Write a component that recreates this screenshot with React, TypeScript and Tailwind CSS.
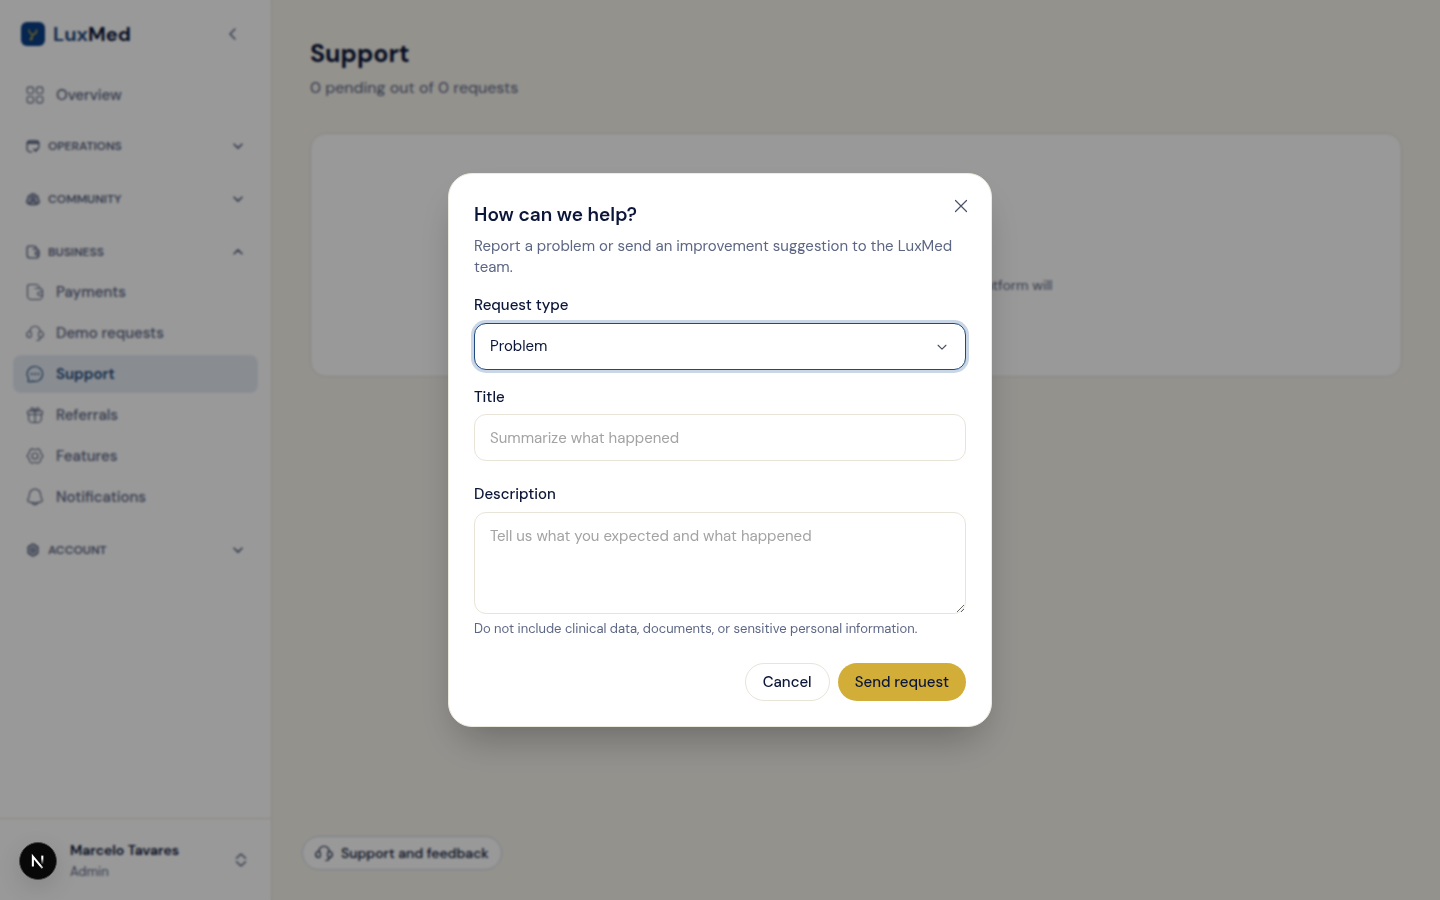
import type { ReactNode } from "react";

type IconProps = { className?: string; strong?: boolean };

function Svg({ className = "size-[18px]", strong, children }: IconProps & { children: ReactNode }) {
  return (
    <svg
      viewBox="0 0 24 24"
      fill="none"
      stroke="currentColor"
      strokeWidth={strong ? 2.4 : 1.5}
      strokeLinecap="round"
      strokeLinejoin="round"
      className={`shrink-0 ${className}`}
      aria-hidden="true"
    >
      {children}
    </svg>
  );
}

function GridIcon(p: IconProps) {
  return (
    <Svg {...p}>
      <rect x="1.5" y="1.5" width="8.5" height="8.5" rx="2.4" />
      <rect x="14" y="1.5" width="8.5" height="8.5" rx="2.4" />
      <rect x="1.5" y="14" width="8.5" height="8.5" rx="2.4" />
      <rect x="14" y="14" width="8.5" height="8.5" rx="2.4" />
    </Svg>
  );
}

function CalendarIcon(p: IconProps) {
  return (
    <Svg {...p}>
      <path d="M10 22H7a5 5 0 0 1-5-5V8a5 5 0 0 1 5-5h10a5 5 0 0 1 5 5v6" />
      <path d="M3 6.500h18" strokeWidth="4" />
      <path d="M13 17.500l2.500 2 6-4-5 5.500" />
    </Svg>
  );
}

function PeopleIcon(p: IconProps) {
  return (
    <Svg {...p}>
      <path d="M7 6a5.500 5.500 0 0 1 10 0c3 0 4.500 3 3 5.500 2.500 1.500 3 4 2.500 6.500-3 4.500-18 4.500-21 0C1 15.500 1.500 13 4 11.500 2.500 9 4 6 7 6Z" fill="currentColor" fillOpacity="0.35" />
      <circle cx="12" cy="10" r="3" />
      <path d="M6 20c0-6 12-6 12 0" />
    </Svg>
  );
}

function WalletIcon(p: IconProps) {
  return (
    <Svg {...p}>
      <path d="M2 5v12a5 5 0 0 0 5 5h10a5 5 0 0 0 5-5v-6a4 4 0 0 0-4-4h-6M2 5a3 3 0 0 1 3-3h8a5 5 0 0 1 5 5" />
      <path d="M22 12h-4a2.300 2.300 0 0 0 0 4.600h4" />
    </Svg>
  );
}

function HeadsetIcon(p: IconProps) {
  return (
    <Svg {...p}>
      <path d="M5 10a7 7 0 0 1 14 0" />
      <path d="M5 10a4 4 0 0 0 0 8c1.500 0 2-.6 2-2v-4c0-1.400-.5-2-2-2Z" />
      <path d="M19 10a4 4 0 0 1 0 8c-1.500 0-2-.6-2-2v-4c0-1.400.5-2 2-2Z" />
      <path d="M19 18c0 2.500-1.500 4-4.500 4" />
    </Svg>
  );
}

function ChatIcon(p: IconProps) {
  return (
    <Svg {...p}>
      <path d="M12 2a10 10 0 1 1-3 19.500c-2 .8-4 1-6.500.5 1-1.500 1.200-2.800.8-4.500A10 10 0 0 1 12 2Z" />
      <path d="M7.500 12h.1M12 12h.1M16.500 12h.1" strokeWidth="2.400" />
    </Svg>
  );
}

function GiftIcon(p: IconProps) {
  return (
    <Svg {...p}>
      <path d="M3.500 11v6a5 5 0 0 0 5 5h7a5 5 0 0 0 5-5v-6" />
      <rect x="2" y="6.500" width="20" height="4.800" rx="1.800" />
      <path d="M12 6.500V22M12 6.500C9 6.500 6.500 6 6.500 4S10 1 12 6.500ZM12 6.500c3 0 5.500-.5 5.500-2.500S14 1 12 6.500Z" />
    </Svg>
  );
}

function HexIcon(p: IconProps) {
  return (
    <Svg {...p}>
      <path d="M8 2.500c1.500 0 2 .9 4 .9s2.500-.9 4-.9 2 .8 3 2.500c.9 1.500.2 2.200 1.200 3.800S22.500 10.500 22.500 12s-1.300 1.600-2.300 3.200-.3 2.300-1.200 3.800c-1 1.700-1.500 2.500-3 2.500s-2-.9-4-.9-2.500.9-4 .9-2-.8-3-2.500c-.9-1.500-.2-2.200-1.200-3.800S1.500 13.500 1.500 12s1.300-1.600 2.300-3.200S4.100 6.500 5 5c1-1.700 1.500-2.500 3-2.500Z" />
      <circle cx="12" cy="12" r="4" />
    </Svg>
  );
}

function BellIcon(p: IconProps) {
  return (
    <Svg {...p}>
      <path d="M12 1.500a7.500 7.500 0 0 0-7.500 7.500c0 3-.8 4.200-1.800 5.800-1 1.700-.4 3 1.500 3.700 4.500 1.400 11.100 1.400 15.600 0 1.900-.7 2.500-2 1.500-3.700-1-1.600-1.800-2.800-1.800-5.800A7.500 7.500 0 0 0 12 1.500Z" />
      <path d="M8.500 20c.8 2.800 6.200 2.800 7 0" />
    </Svg>
  );
}

function CogIcon(p: IconProps) {
  return (
    <Svg {...p}>
      <path
        d="M9.500 2h5l.8 3 3.200-.5 2.500 4.300L19.500 12l1.500 3.200-2.500 4.300-3.200-.5-.8 3h-5l-.8-3-3.200.5L3 15.200 4.500 12 3 8.800l2.500-4.300 3.200.5Z"
        fill="currentColor"
        fillOpacity="0.35"
      />
      <circle cx="12" cy="12" r="3.200" />
    </Svg>
  );
}

function Chevron({ dir, className }: { dir: "up" | "down" | "left"; className: string }) {
  const d = { up: "M3.500 10L8 5.500l4.500 4.500", down: "M3.500 6L8 10.500 12.500 6", left: "M10 3L5 8l5 5" }[dir];
  return (
    <svg viewBox="0 0 16 16" fill="none" stroke="currentColor" strokeLinecap="round" strokeLinejoin="round" className={`shrink-0 ${className}`} aria-hidden="true">
      <path d={d} />
    </svg>
  );
}

function NavItem({ icon, label, active }: { icon: ReactNode; label: string; active?: boolean }) {
  return (
    <a
      href="#"
      aria-current={active ? "page" : undefined}
      className={`flex h-[38px] items-center gap-3 rounded-lg px-[13px] text-[15px] ${
        active ? "bg-[#e5ebf3] font-semibold text-[#1f4a7d]" : "font-medium text-[#5d6785]"
      }`}
    >
      {icon}
      {label}
    </a>
  );
}

function Section({ icon, label, open }: { icon: ReactNode; label: string; open?: boolean }) {
  return (
    <button type="button" aria-expanded={!!open} className="flex h-[33px] w-full items-center gap-2 px-[13px] text-left text-[12px] font-semibold text-[#5d6785]">
      {icon}
      <span className="flex-1">{label}</span>
      <Chevron dir={open ? "up" : "down"} className="size-[14px] stroke-2" />
    </button>
  );
}

function Sidebar() {
  return (
    <aside className="flex w-[272px] shrink-0 flex-col border-r border-[#e8e4d8] bg-white">
      <div className="flex h-[68px] items-center pr-[30px] pl-[21px]">
        <svg viewBox="0 0 24 24" className="size-6" aria-hidden="true">
          <rect width="24" height="24" rx="6" fill="#0a3f86" />
          <path d="M8 8c.4 3 2 4.500 4 4.500M15.500 8c.3 2.500-1.200 4-3.500 4.500-.5 2-1.200 3.500-2.700 5" fill="none" stroke="#b8a53c" strokeWidth="1.500" strokeLinecap="round" />
          <circle cx="10.200" cy="17" r="1.400" fill="#b8a53c" />
        </svg>
        <span className="ml-2 flex-1 text-[20px] font-bold text-[#0b1638]">
          <span className="text-[#1f4a7d]">Lux</span>Med
        </span>
        <button type="button" aria-label="Collapse sidebar" className="text-[#5d6785]">
          <Chevron dir="left" className="size-4 stroke-[1.5]" />
        </button>
      </div>
      <nav className="flex-1 px-[13px] pt-2">
        <NavItem icon={<GridIcon />} label="Overview" />
        <div className="mt-[15px] flex flex-col gap-5">
          <Section icon={<CalendarIcon className="size-[14px]" strong />} label="OPERATIONS" />
          <Section icon={<PeopleIcon className="size-[14px]" strong />} label="COMMUNITY" />
          <Section icon={<WalletIcon className="size-[14px]" strong />} label="BUSINESS" open />
        </div>
        <div className="mt-[5px] mb-[17px] flex flex-col gap-[3px]">
          <NavItem icon={<WalletIcon />} label="Payments" />
          <NavItem icon={<HeadsetIcon />} label="Demo requests" />
          <NavItem icon={<ChatIcon />} label="Support" active />
          <NavItem icon={<GiftIcon />} label="Referrals" />
          <NavItem icon={<HexIcon />} label="Features" />
          <NavItem icon={<BellIcon />} label="Notifications" />
        </div>
        <Section icon={<CogIcon className="size-[14px]" strong />} label="ACCOUNT" />
      </nav>
      <div className="flex h-[82px] items-center border-t border-[#e8e4d8] pr-[22px] pl-[70px]">
        <div className="flex-1 pt-0.5">
          <p className="text-[14px] leading-[22px] font-semibold text-[#0b1638]">Marcelo Tavares</p>
          <p className="text-[13px] leading-[22px] text-[#5d6785]">Admin</p>
        </div>
        <button type="button" aria-label="Account menu" className="text-[#5d6785]">
          <svg viewBox="0 0 16 16" fill="none" stroke="currentColor" strokeWidth="1.500" strokeLinecap="round" strokeLinejoin="round" className="size-4" aria-hidden="true">
            <path d="M3.500 6.300L6.800 3a1.700 1.700 0 0 1 2.400 0l3.300 3.300M3.500 9.700L6.800 13a1.700 1.700 0 0 0 2.400 0l3.300-3.300" />
          </svg>
        </button>
      </div>
    </aside>
  );
}

function DevBadge() {
  return (
    <button
      type="button"
      aria-label="Open developer tools"
      className="fixed bottom-[20px] left-[19px] flex size-[38px] items-center justify-center rounded-full border border-[#4a4a4a] bg-[#080808] shadow-[0_8px_24px_rgba(0,0,0,0.12)]"
    >
      <svg viewBox="0 0 40 40" className="size-[38px]" fill="none" aria-hidden="true">
        <defs>
          <linearGradient id="stem" x1="0" y1="14" x2="0" y2="24" gradientUnits="userSpaceOnUse">
            <stop offset="0.300" stopColor="#fff" />
            <stop offset="1" stopColor="#fff" stopOpacity="0" />
          </linearGradient>
          <linearGradient id="slash" x1="14" y1="14" x2="27" y2="28" gradientUnits="userSpaceOnUse">
            <stop offset="0.700" stopColor="#fff" />
            <stop offset="1" stopColor="#fff" stopOpacity="0.500" />
          </linearGradient>
        </defs>
        <path d="M14.300 26V15.200L25 28" stroke="url(#slash)" strokeWidth="2.300" />
        <path d="M24.800 14v10" stroke="url(#stem)" strokeWidth="2.300" />
      </svg>
    </button>
  );
}

const labelClass = "block text-[15px] leading-5 font-medium text-[#0b1638]";

function SupportDialog() {
  return (
    <div className="fixed inset-0 flex items-center justify-center bg-black/40 p-4 backdrop-blur-[1px]">
      <div
        role="dialog"
        aria-modal="true"
        aria-labelledby="dialog-title"
        className="relative w-full max-w-[544px] rounded-3xl border border-[#ece9df] bg-white px-[25px] pt-[26px] pb-[25px] shadow-[0_20px_40px_-12px_rgba(0,0,0,0.3)]"
      >
        <button type="button" aria-label="Close" className="absolute top-6 right-[22px] text-[#4a5068]">
          <svg viewBox="0 0 16 16" fill="none" stroke="currentColor" strokeWidth="1.200" strokeLinecap="round" className="size-4" aria-hidden="true">
            <path d="M2.500 2.500l11 11M13.500 2.500l-11 11" />
          </svg>
        </button>
        <h2 id="dialog-title" className="text-[19px] leading-[30px] font-semibold text-[#0b1638]">
          How can we help?
        </h2>
        <p className="mt-1.5 text-[15px] leading-[21px] text-[#5d6785]">
          Report a problem or send an improvement suggestion to the LuxMed team.
        </p>
        <form className="mt-[17px]">
          <label htmlFor="request-type" className={labelClass}>
            Request type
          </label>
          <div className="mt-2 grid items-center">
            <select
              id="request-type"
              className="col-start-1 row-start-1 h-[47px] w-full appearance-none rounded-xl border border-[#1f4a7d] bg-white px-[15px] text-[15px] text-[#0b1638] ring-3 ring-[#c9d6e6] outline-none"
            >
              <option>Problem</option>
            </select>
            <Chevron dir="down" className="pointer-events-none col-start-1 row-start-1 mr-[17px] size-[14px] justify-self-end stroke-[1.3] text-[#4a5068]" />
          </div>
          <label htmlFor="title" className={`mt-[17px] ${labelClass}`}>
            Title
          </label>
          <input
            id="title"
            type="text"
            placeholder="Summarize what happened"
            className="mt-[7px] h-[47px] w-full rounded-xl border border-[#e8e4d8] px-[15px] text-[15px] placeholder:text-[#a3a3a3]"
          />
          <label htmlFor="description" className={`mt-[23px] ${labelClass}`}>
            Description
          </label>
          <textarea
            id="description"
            placeholder="Tell us what you expected and what happened"
            className="mt-2 block h-[102px] w-full resize rounded-xl border border-[#e8e4d8] px-[15px] py-3 text-[15px] leading-[22px] placeholder:text-[#a3a3a3]"
          />
          <p className="mt-1.5 text-[13px] leading-[18px] text-[#5d6785]">
            Do not include clinical data, documents, or sensitive personal information.
          </p>
          <div className="mt-[25px] flex justify-end gap-2">
            <button type="button" className="h-[38px] rounded-full border border-[#e8e4d8] px-[17px] text-[15px] font-medium text-[#0b1638]">
              Cancel
            </button>
            <button type="submit" className="h-[38px] rounded-full bg-[#d2ae38] px-[17px] text-[15px] font-medium text-[#0b1638]">
              Send request
            </button>
          </div>
        </form>
      </div>
    </div>
  );
}

export default function App() {
  return (
    <div className="flex min-h-screen bg-[#f6f3ec] font-['DM_Sans',Inter,sans-serif]">
      <Sidebar />
      <main className="flex-1 px-[38px] pt-9">
        <h1 className="text-[25px] leading-9 font-bold text-[#0b1638]">Support</h1>
        <p className="mt-1 text-[16px] leading-6 text-[#5d6785]">0 pending out of 0 requests</p>
        <section className="mt-[33px] flex h-[244px] items-center justify-center rounded-2xl border border-[#e4e1d8] bg-white">
          <p className="mt-[60px] w-[393px] text-right text-[14px] text-[#5d6785]">platform will</p>
        </section>
        <button
          type="button"
          className="fixed bottom-[30px] left-[302px] flex h-[34px] items-center gap-2 rounded-full border border-[#cbd5e0] bg-white px-3 text-[14px] font-medium text-[#0b1638]"
        >
          <HeadsetIcon />
          Support and feedback
        </button>
      </main>
      <SupportDialog />
      <DevBadge />
    </div>
  );
}
